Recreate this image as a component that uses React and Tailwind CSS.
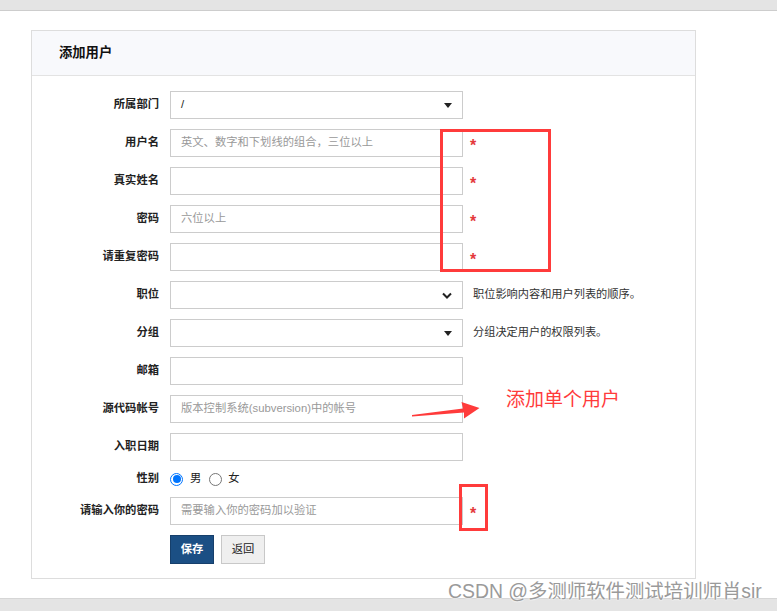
import React from "react";

const FONT = { fontFamily: '"Liberation Sans", "Noto Sans CJK SC", sans-serif' };

function Tri() {
  return (
    <svg width="8" height="5" viewBox="0 0 8 5" className="shrink-0">
      <polygon points="0,0 8,0 4,5" fill="#222" />
    </svg>
  );
}

function Chevron() {
  return (
    <svg width="10" height="7" viewBox="0 0 10 7" className="shrink-0">
      <polyline points="1,1.5 5,5.5 9,1.5" fill="none" stroke="#222" strokeWidth="2" />
    </svg>
  );
}

function Label({ children }) {
  return (
    <div className="w-[127px] shrink-0 text-right text-[11.3px] font-bold text-[#222] leading-none">
      {children}
    </div>
  );
}

function Box({ children, className = "" }) {
  return (
    <div
      className={
        "ml-[11px] w-[293px] h-[28px] shrink-0 border border-[#ccc] bg-white flex items-center pl-[10px] pr-[10px] text-[11.3px] leading-none " +
        className
      }
    >
      {children}
    </div>
  );
}

function Star() {
  return <span className="ml-[7px] text-[16px] font-bold text-[#e4393c] leading-none pt-[6px]">*</span>;
}

function Help({ children }) {
  return <span className="ml-[10px] text-[11.2px] text-[#333] leading-none">{children}</span>;
}

function Row({ label, children }) {
  return (
    <div className="flex items-center h-[28px]">
      <Label>{label}</Label>
      {children}
    </div>
  );
}

function Ph({ children }) {
  return <span className="text-[#999]">{children}</span>;
}

function Radio({ checked }) {
  return checked ? (
    <span className="w-[13px] h-[13px] rounded-full border border-[#0075ff] flex items-center justify-center shrink-0">
      <span className="block w-[8px] h-[8px] rounded-full bg-[#0075ff]" />
    </span>
  ) : (
    <span className="block w-[13px] h-[13px] rounded-full border border-[#767676] shrink-0" />
  );
}

export default function App() {
  return (
    <div className="relative w-[777px] h-[611px] overflow-hidden bg-white flex flex-col" style={FONT}>
      <div className="h-[11px] shrink-0 bg-[#e4e4e4] border-b border-[#cdcdcd]" />
      <div className="pl-[31px] pt-[19px]">
        <div className="w-[665px] border border-[#ddd]">
          <div className="h-[45px] bg-[#f8f9fc] border-b border-[#e3e3e3] flex items-center pl-[27px] text-[13.3px] text-[#111] font-bold">
            添加用户
          </div>
          <div className="pt-[15px] pb-[14px] flex flex-col gap-[10px]">
            <Row label="所属部门">
              <Box className="justify-between">
                <span className="text-[#222]">/</span>
                <Tri />
              </Box>
            </Row>
            <Row label="用户名">
              <Box><Ph>英文、数字和下划线的组合，三位以上</Ph></Box>
              <Star />
            </Row>
            <Row label="真实姓名">
              <Box />
              <Star />
            </Row>
            <Row label="密码">
              <Box><Ph>六位以上</Ph></Box>
              <Star />
            </Row>
            <Row label="请重复密码">
              <Box />
              <Star />
            </Row>
            <Row label="职位">
              <Box className="justify-end pr-[5px]">
                <Chevron />
              </Box>
              <Help>职位影响内容和用户列表的顺序。</Help>
            </Row>
            <Row label="分组">
              <Box className="justify-end">
                <Tri />
              </Box>
              <Help>分组决定用户的权限列表。</Help>
            </Row>
            <Row label="邮箱">
              <Box />
            </Row>
            <Row label="源代码帐号">
              <Box><Ph>版本控制系统(subversion)中的帐号</Ph></Box>
            </Row>
            <Row label="入职日期">
              <Box />
            </Row>
            <div className="flex items-center h-[16px]">
              <Label>性别</Label>
              <div className="ml-[11px] flex items-center text-[11.3px] text-[#222] leading-none">
                <Radio checked />
                <span className="ml-[7px]">男</span>
                <span className="ml-[8px] flex"><Radio /></span>
                <span className="ml-[6px]">女</span>
              </div>
            </div>
            <Row label="请输入你的密码">
              <Box><Ph>需要输入你的密码加以验证</Ph></Box>
              <Star />
            </Row>
            <div className="flex items-center">
              <div className="w-[138px] shrink-0" />
              <button className="w-[44px] h-[29px] bg-[#1b4f84] border border-[#163f6b] text-white text-[11.3px] font-bold leading-none">
                保存
              </button>
              <button className="ml-[7px] w-[44px] h-[29px] bg-[#efefef] border border-[#c8c8c8] text-[#222] text-[11.3px] leading-none">
                返回
              </button>
            </div>
          </div>
        </div>
      </div>
      <div className="mt-auto h-[13px] shrink-0 bg-[#e4e4e4] border-t border-[#d6d6d6]" />

      {/* annotations */}
      <div className="absolute left-[440px] top-[129px] w-[111px] h-[143px] border-[3px] border-[#ff3b3b]" />
      <div className="absolute left-[459px] top-[484px] w-[29px] h-[47px] border-[3px] border-[#ff3b3b]" />
      <svg className="absolute left-[410px] top-[400px]" width="72" height="20" viewBox="410 400 72 20">
        <polygon
          points="412,415 463,408.5 461.5,402 479.5,408 464,418.5 464,412.5 412,416.5"
          fill="#ff3b3b"
        />
      </svg>
      <div className="absolute left-[506px] top-[390px] text-[19px] leading-none text-[#ff3b3b]">
        添加单个用户
      </div>
      <div
        className="absolute left-[448px] top-[582px] text-[19.4px] leading-none text-[#9a9a9a] whitespace-nowrap"
        style={{ textShadow: "0 0 2px #fff, 0 0 2px #fff" }}
      >
        CSDN @多测师软件测试培训师肖sir
      </div>
    </div>
  );
}
